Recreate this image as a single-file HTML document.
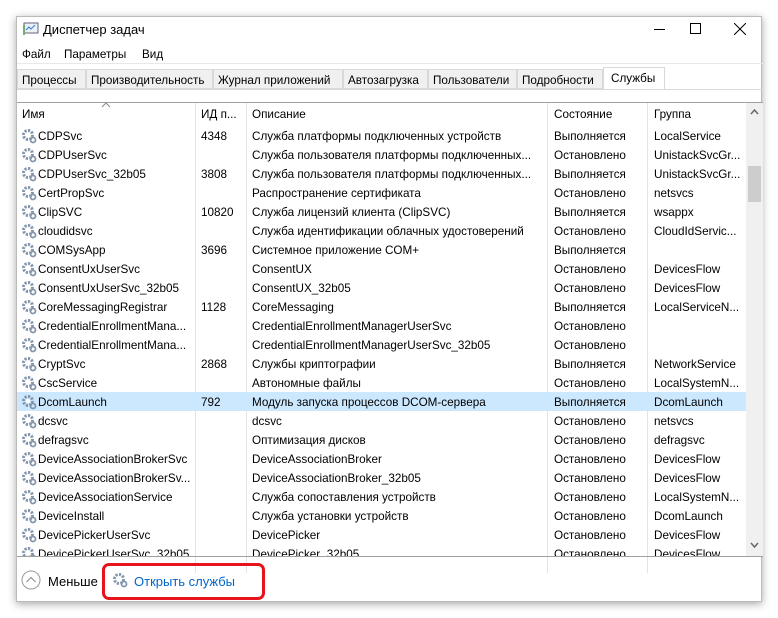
<!DOCTYPE html>
<html><head><meta charset="utf-8"><style>
*{margin:0;padding:0;box-sizing:border-box}
body{width:778px;height:618px;background:#fff;font-family:"Liberation Sans",sans-serif;font-size:11.7px;color:#000;position:relative;overflow:hidden}
.win{position:absolute;left:16px;top:16px;width:746px;height:586px;background:#fff;box-shadow:0 2px 8px rgba(0,0,0,.35);border:1px solid #bbb}
.a{position:absolute;white-space:nowrap}
.tab{position:absolute;top:52px;height:20px;background:#f0f0f0;border:1px solid #d9d9d9;padding:3px 0 0 4px}
.row{position:absolute;left:0;width:729px;height:19px}
.row span{position:absolute;top:4px;white-space:nowrap}
.sel{background:#cce8ff}
svg.g{position:absolute;left:4px;top:2px}
</style></head><body>
<div class="win">
<svg class="a" style="left:6px;top:5px" width="16" height="14"><rect x="1" y="1" width="14" height="10" fill="#eaf2f8" stroke="#667"/><polyline points="3,8 6,5 8,7 12,3" fill="none" stroke="#3a7bd5"/><rect x="0" y="3" width="2" height="10" fill="#7a7"/></svg>
<div class="a" style="left:26px;top:5px;font-size:13px">Диспетчер задач</div>
<div class="a" style="left:637px;top:12px;width:11px;height:1px;background:#000"></div>
<div class="a" style="left:673px;top:6px;width:11px;height:11px;border:1px solid #000"></div>
<svg class="a" style="left:717px;top:6px" width="12" height="12"><path d="M0 0L12 12M12 0L0 12" stroke="#000"/></svg>
<div class="a" style="left:5px;top:31px">Файл</div>
<div class="a" style="left:47px;top:31px">Параметры</div>
<div class="a" style="left:125px;top:31px">Вид</div>
<div class="a" style="left:0;top:46px;width:746px;height:1px;background:#e8e8e8"></div>
<div class="tab" style="left:0;width:69px;padding-top:4px">Процессы</div>
<div class="tab" style="left:69px;width:127px;padding-top:4px">Производительность</div>
<div class="tab" style="left:196px;width:130px;padding-top:4px">Журнал приложений</div>
<div class="tab" style="left:326px;width:85px;padding-top:4px">Автозагрузка</div>
<div class="tab" style="left:411px;width:89px;padding-top:4px">Пользователи</div>
<div class="tab" style="left:500px;width:86px;padding-top:4px">Подробности</div>
<div class="tab" style="left:586px;top:50px;height:23px;width:62px;background:#fff;border-bottom:none;padding:4px 0 0 7px">Службы</div>
<div class="a" style="left:0;top:72px;width:746px;height:1px;background:#d9d9d9"></div>
<div class="a" style="left:0;top:85px;width:746px;height:1px;background:#a0a0a0"></div>
<svg class="a" style="left:84px;top:85px" width="10" height="6"><path d="M1 5L5 1L9 5" fill="none" stroke="#888"/></svg>
<div class="a" style="left:178px;top:86px;width:1px;height:470px;background:#e3e3e3"></div>
<div class="a" style="left:229px;top:86px;width:1px;height:470px;background:#e3e3e3"></div>
<div class="a" style="left:530px;top:86px;width:1px;height:470px;background:#e3e3e3"></div>
<div class="a" style="left:630px;top:86px;width:1px;height:470px;background:#e3e3e3"></div>
<div class="a" style="left:5px;top:91px">Имя</div>
<div class="a" style="left:184px;top:91px">ИД п...</div>
<div class="a" style="left:235px;top:91px">Описание</div>
<div class="a" style="left:537px;top:91px">Состояние</div>
<div class="a" style="left:637px;top:91px">Группа</div>
<div class="a" style="left:729px;top:86px;width:17px;height:453px;background:#f0f0f0"></div>
<svg class="a" style="left:733px;top:92px" width="9" height="6"><path d="M1 5L4.5 1L8 5" fill="none" stroke="#666" stroke-width="1.5"/></svg>
<div class="a" style="left:731px;top:149px;width:13px;height:36px;background:#cdcdcd"></div>
<svg class="a" style="left:733px;top:525px" width="9" height="6"><path d="M1 1L4.5 5L8 1" fill="none" stroke="#666" stroke-width="1.5"/></svg>
<div class="a" style="left:0;top:109px;width:729px;height:430px;overflow:hidden" id="rows">
</div>
<div class="a" style="left:0;top:539px;width:746px;height:1px;background:#a0a0a0"></div>
<svg class="a" style="left:4px;top:553px" width="20" height="20"><circle cx="10" cy="10" r="9" fill="none" stroke="#999"/><path d="M5.5 12L10 7.5L14.5 12" fill="none" stroke="#888"/></svg>
<div class="a" style="left:31px;top:557px;font-size:13px">Меньше</div>
<svg class="a" style="left:95px;top:555px" width="16" height="16"><circle cx="7" cy="7" r="4.5" fill="none" stroke="#8395ab" stroke-width="3" stroke-dasharray="2.2 1.3"/><circle cx="7" cy="7" r="2" fill="#fff"/><circle cx="12" cy="12" r="2.5" fill="none" stroke="#8395ab" stroke-width="1.8"/></svg>
<div class="a" style="left:117px;top:557px;font-size:13px;color:#0066cc">Открыть службы</div>
<div class="a" style="left:85px;top:546px;width:163px;height:37px;border:3px solid #e8121c;border-radius:7px"></div>
</div>
<script>
var d=[["CDPSvc","4348","Служба платформы подключенных устройств","Выполняется","LocalService"],
["CDPUserSvc","","Служба пользователя платформы подключенных...","Остановлено","UnistackSvcGr..."],
["CDPUserSvc_32b05","3808","Служба пользователя платформы подключенных...","Выполняется","UnistackSvcGr..."],
["CertPropSvc","","Распространение сертификата","Остановлено","netsvcs"],
["ClipSVC","10820","Служба лицензий клиента (ClipSVC)","Выполняется","wsappx"],
["cloudidsvc","","Служба идентификации облачных удостоверений","Остановлено","CloudIdServic..."],
["COMSysApp","3696","Системное приложение COM+","Выполняется",""],
["ConsentUxUserSvc","","ConsentUX","Остановлено","DevicesFlow"],
["ConsentUxUserSvc_32b05","","ConsentUX_32b05","Остановлено","DevicesFlow"],
["CoreMessagingRegistrar","1128","CoreMessaging","Выполняется","LocalServiceN..."],
["CredentialEnrollmentMana...","","CredentialEnrollmentManagerUserSvc","Остановлено",""],
["CredentialEnrollmentMana...","","CredentialEnrollmentManagerUserSvc_32b05","Остановлено",""],
["CryptSvc","2868","Службы криптографии","Выполняется","NetworkService"],
["CscService","","Автономные файлы","Остановлено","LocalSystemN..."],
["DcomLaunch","792","Модуль запуска процессов DCOM-сервера","Выполняется","DcomLaunch"],
["dcsvc","","dcsvc","Остановлено","netsvcs"],
["defragsvc","","Оптимизация дисков","Остановлено","defragsvc"],
["DeviceAssociationBrokerSvc","","DeviceAssociationBroker","Остановлено","DevicesFlow"],
["DeviceAssociationBrokerSv...","","DeviceAssociationBroker_32b05","Остановлено","DevicesFlow"],
["DeviceAssociationService","","Служба сопоставления устройств","Остановлено","LocalSystemN..."],
["DeviceInstall","","Служба установки устройств","Остановлено","DcomLaunch"],
["DevicePickerUserSvc","","DevicePicker","Остановлено","DevicesFlow"],
["DevicePickerUserSvc_32b05","","DevicePicker_32b05","Остановлено","DevicesFlow"]];
var g='<svg class="g" width="16" height="16"><circle cx="7" cy="7" r="4.5" fill="none" stroke="#8395ab" stroke-width="3" stroke-dasharray="2.2 1.3"/><circle cx="7" cy="7" r="2" fill="#fff"/><circle cx="12" cy="12" r="2.5" fill="none" stroke="#8395ab" stroke-width="1.8"/></svg>';
var h='';d.forEach(function(r,i){h+='<div class="row'+(i==14?' sel':'')+'" style="top:'+(i*19)+'px">'+g+'<span style="left:21px">'+r[0]+'</span><span style="left:184px">'+r[1]+'</span><span style="left:235px">'+r[2]+'</span><span style="left:537px">'+r[3]+'</span><span style="left:637px">'+r[4]+'</span></div>';});
document.getElementById('rows').innerHTML=h;
</script>
</body></html>
